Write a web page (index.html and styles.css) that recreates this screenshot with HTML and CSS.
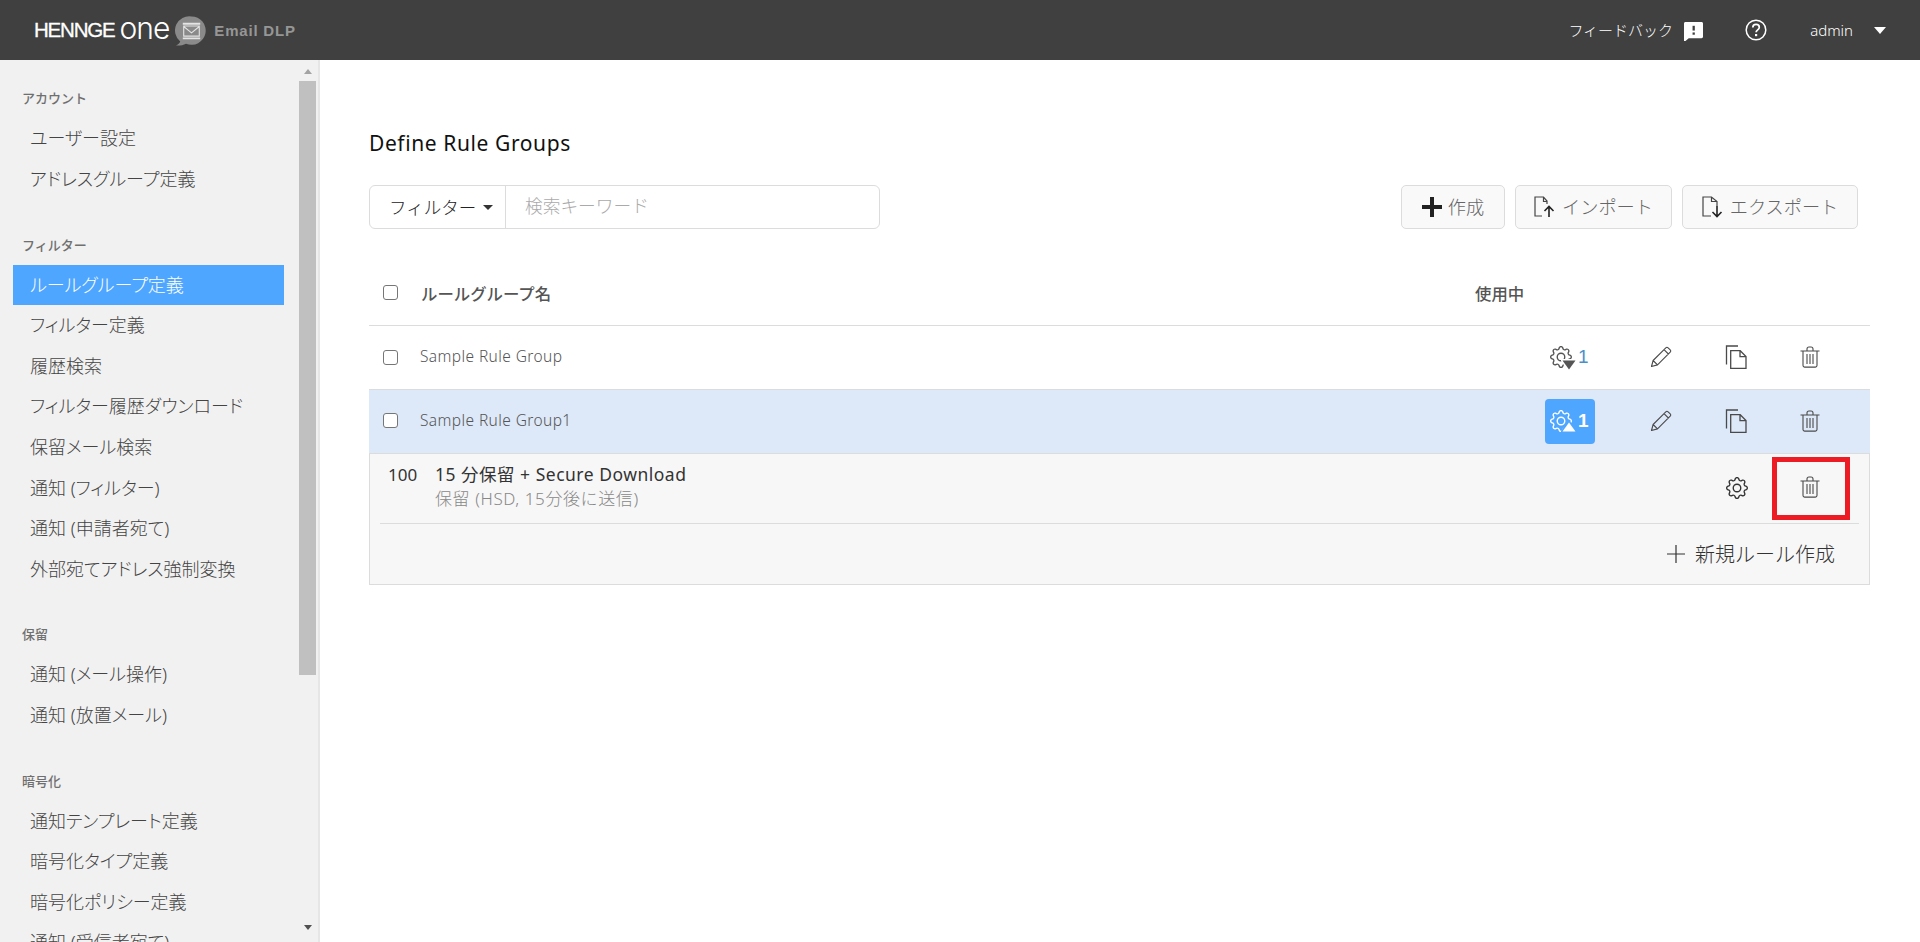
FILE: index.html
```html
<!DOCTYPE html>
<html lang="ja">
<head>
<meta charset="utf-8">
<title>Define Rule Groups</title>
<link rel="stylesheet" href="styles.css">
</head>
<body>
<svg class="defs" xmlns="http://www.w3.org/2000/svg">
  <symbol id="gear" viewBox="0 0 16 16">
    <path d="M8 4.754a3.246 3.246 0 1 0 0 6.492 3.246 3.246 0 0 0 0-6.492zM5.754 8a2.246 2.246 0 1 1 4.492 0 2.246 2.246 0 0 1-4.492 0z"/>
    <path d="M9.796 1.343c-.527-1.79-3.065-1.79-3.592 0l-.094.319a.873.873 0 0 1-1.255.52l-.292-.16c-1.64-.892-3.433.902-2.54 2.541l.159.292a.873.873 0 0 1-.52 1.255l-.319.094c-1.79.527-1.79 3.065 0 3.592l.319.094a.873.873 0 0 1 .52 1.255l-.16.292c-.892 1.64.901 3.434 2.541 2.54l.292-.159a.873.873 0 0 1 1.255.52l.094.319c.527 1.79 3.065 1.79 3.592 0l.094-.319a.873.873 0 0 1 1.255-.52l.292.16c1.64.893 3.434-.902 2.54-2.541l-.159-.292a.873.873 0 0 1 .52-1.255l.319-.094c1.79-.527 1.79-3.065 0-3.592l-.319-.094a.873.873 0 0 1-.52-1.255l.16-.292c.893-1.64-.902-3.433-2.541-2.54l-.292.159a.873.873 0 0 1-1.255-.52l-.094-.319zm-2.633.283c.246-.835 1.428-.835 1.674 0l.094.319a1.873 1.873 0 0 0 2.693 1.115l.291-.16c.764-.415 1.6.42 1.184 1.185l-.159.292a1.873 1.873 0 0 0 1.116 2.692l.318.094c.835.246.835 1.428 0 1.674l-.319.094a1.873 1.873 0 0 0-1.115 2.693l.16.291c.415.764-.42 1.6-1.185 1.184l-.291-.159a1.873 1.873 0 0 0-2.693 1.116l-.094.318c-.246.835-1.428.835-1.674 0l-.094-.319a1.873 1.873 0 0 0-2.692-1.115l-.292.16c-.764.415-1.6-.42-1.184-1.185l.159-.291A1.873 1.873 0 0 0 1.945 8.93l-.319-.094c-.835-.246-.835-1.428 0-1.674l.319-.094A1.873 1.873 0 0 0 3.06 4.377l-.16-.292c-.415-.764.42-1.6 1.185-1.184l.292.159a1.873 1.873 0 0 0 2.692-1.115l.094-.319z"/>
  </symbol>
  <symbol id="pencil" viewBox="0 0 22 22">
    <path d="M1.500 20.500l1.600-6L15.800 1.800c.7-.7 1.600-.7 2.300 0l2.100 2.100c.7.700.7 1.600 0 2.300L7.500 18.900z M3.100 14.500l4.400 4.400 M14 3.600l4.400 4.400" fill="none" stroke="currentColor" stroke-width="1.100" stroke-linejoin="round"/>
  </symbol>
  <symbol id="copy" viewBox="0 0 22 24">
    <path d="M13 1H1.500v18.500" fill="none" stroke="currentColor" stroke-width="1.300"/>
    <path d="M5.700 5.700h9.500l5.800 5.800v11.800H5.700z M15 5.700v6h6" fill="none" stroke="currentColor" stroke-width="1.300"/>
  </symbol>
  <symbol id="trash" viewBox="0 0 20 22">
    <path d="M.5 5h19 M7 5V3c0-1.300.8-2 2-2h2c1.200 0 2 .7 2 2v2 M3 5v14.500c0 1 .7 1.600 1.600 1.600h10.800c.9 0 1.600-.6 1.600-1.600V5 M7 8v10 M10 8v10 M13 8v10" fill="none" stroke="currentColor" stroke-width="1.100"/>
  </symbol>
</svg>

<header class="topbar">
  <div class="brand">
    <span class="logo-word">HENNGE</span><span class="logo-one">one</span>
    <svg class="logo-mark" viewBox="0 0 36 36" aria-hidden="true">
      <path d="M18 1.500a15.500 15.500 0 1 1-6 29.800C9 33 5 33.600 1 33.300c2.500-1 4-2.600 4.700-4.500A15.500 15.500 0 0 1 18 1.500z" fill="#8a8a8a"/>
      <path d="M8.500 9.500h19 M8.500 25.500h19" stroke="#e4e4e4" stroke-width="2"/>
      <path d="M9.500 12v11h17V12z M9.500 12.500l8.500 7 8.500-7" fill="none" stroke="#e4e4e4" stroke-width="1.200"/>
    </svg>
    <span class="product">Email DLP</span>
  </div>
  <div class="top-actions">
    <span class="feedback">フィードバック</span>
    <svg class="ico-feedback" viewBox="0 0 20 20" aria-hidden="true">
      <path d="M1.500 0h17c.8 0 1.500.7 1.500 1.500v14c0 .8-.7 1.500-1.500 1.500H5l-4 3.500c-.4.300-1 .1-1-.5V1.500C0 .7.700 0 1.500 0z" fill="#fff"/>
      <rect x="9" y="4" width="2.400" height="5" fill="#404040"/>
      <rect x="9" y="11" width="2.400" height="2.400" fill="#404040"/>
    </svg>
    <svg class="ico-help" viewBox="0 0 22 22" aria-hidden="true">
      <circle cx="11" cy="11" r="9.800" fill="none" stroke="#fff" stroke-width="1.500"/>
      <path d="M7.800 8.600c0-2 1.500-3.200 3.300-3.200s3.200 1.200 3.200 2.900c0 2.500-3.200 2.600-3.200 5" fill="none" stroke="#fff" stroke-width="1.700"/>
      <rect x="10" y="15" width="2.200" height="2.200" fill="#fff"/>
    </svg>
    <span class="user">admin</span>
    <span class="caret-user"></span>
  </div>
</header>

<div class="shell">
  <aside class="sidebar">
    <nav class="nav">
      <h3 class="nav-title">アカウント</h3>
      <a class="nav-item">ユーザー設定</a>
      <a class="nav-item">アドレスグループ定義</a>
      <h3 class="nav-title">フィルター</h3>
      <a class="nav-item active">ルールグループ定義</a>
      <a class="nav-item">フィルター定義</a>
      <a class="nav-item">履歴検索</a>
      <a class="nav-item">フィルター履歴ダウンロード</a>
      <a class="nav-item">保留メール検索</a>
      <a class="nav-item">通知 (フィルター)</a>
      <a class="nav-item">通知 (申請者宛て)</a>
      <a class="nav-item">外部宛てアドレス強制変換</a>
      <h3 class="nav-title">保留</h3>
      <a class="nav-item">通知 (メール操作)</a>
      <a class="nav-item">通知 (放置メール)</a>
      <h3 class="nav-title">暗号化</h3>
      <a class="nav-item">通知テンプレート定義</a>
      <a class="nav-item">暗号化タイプ定義</a>
      <a class="nav-item">暗号化ポリシー定義</a>
      <a class="nav-item">通知 (受信者宛て)</a>
    </nav>
    <div class="scrollbar">
      <span class="arrow-up"></span>
      <span class="thumb"></span>
      <span class="arrow-down"></span>
    </div>
  </aside>

  <main class="main">
    <h1 class="page-title">Define Rule Groups</h1>

    <div class="toolbar">
      <div class="search">
        <div class="search-filter">フィルター<span class="caret-small"></span></div>
        <div class="search-input">検索キーワード</div>
      </div>
      <div class="buttons">
        <button class="btn btn-create">
          <svg class="ico-plus" viewBox="0 0 20 20" aria-hidden="true"><path d="M8 0h4v8h8v4h-8v8H8v-8H0V8h8z" fill="#222"/></svg>作成
        </button>
        <button class="btn btn-import">
          <svg class="ico-file" viewBox="0 0 22 22" aria-hidden="true">
            <path d="M8 20H1V1h8.500L13 5v3 M9.500 1v4.500H13" fill="none" stroke="#444" stroke-width="1.200"/>
            <path d="M15 21V11 M10.500 15l4.500-4.500 4.500 4.500" fill="none" stroke="#222" stroke-width="1.600"/>
          </svg>インポート
        </button>
        <button class="btn btn-export">
          <svg class="ico-file" viewBox="0 0 22 22" aria-hidden="true">
            <path d="M9 20H1V1h8.500L15 5.500V10 M9.500 1v4.500H15" fill="none" stroke="#444" stroke-width="1.200"/>
            <path d="M15 10v10 M10.500 16l4.500 4.500 4.500-4.500" fill="none" stroke="#222" stroke-width="1.600"/>
          </svg>エクスポート
        </button>
      </div>
    </div>

    <div class="table">
      <div class="head-row">
        <span class="check"></span>
        <span class="head-name">ルールグループ名</span>
        <span class="head-use">使用中</span>
      </div>

      <div class="row">
        <span class="check"></span>
        <span class="row-name">Sample Rule Group</span>
        <span class="usage">
          <svg class="ico-gear"><use href="#gear"/></svg>
          <svg class="tri tri-closed" viewBox="0 0 16 12" aria-hidden="true"><polygon points="1.500,1.500 14.500,1.500 8,10.500"/></svg>
          <span class="usage-num">1</span>
        </span>
        <span class="cell-edit"><svg class="ico-pencil"><use href="#pencil"/></svg></span>
        <span class="cell-copy"><svg class="ico-copy"><use href="#copy"/></svg></span>
        <span class="cell-del"><svg class="ico-trash"><use href="#trash"/></svg></span>
      </div>

      <div class="row selected">
        <span class="check"></span>
        <span class="row-name">Sample Rule Group1</span>
        <span class="usage open">
          <svg class="ico-gear"><use href="#gear"/></svg>
          <svg class="tri tri-open" viewBox="0 0 16 12" aria-hidden="true"><polygon points="1.500,10.500 14.500,10.500 8,1.500"/></svg>
          <span class="usage-num">1</span>
        </span>
        <span class="cell-edit"><svg class="ico-pencil"><use href="#pencil"/></svg></span>
        <span class="cell-copy"><svg class="ico-copy"><use href="#copy"/></svg></span>
        <span class="cell-del"><svg class="ico-trash"><use href="#trash"/></svg></span>
      </div>

      <div class="detail">
        <div class="rule">
          <span class="rule-order">100</span>
          <div class="rule-text">
            <div class="rule-name">15 分保留 + Secure Download</div>
            <div class="rule-sub">保留 (HSD, 15分後に送信)</div>
          </div>
          <span class="rule-gear"><svg class="ico-gear-dark"><use href="#gear"/></svg></span>
          <span class="rule-del"><svg class="ico-trash"><use href="#trash"/></svg></span>
          <span class="highlight"></span>
        </div>
        <div class="new-rule">
          <svg class="ico-thin-plus" viewBox="0 0 18 18" aria-hidden="true"><path d="M0 9h18 M9 0v18" stroke="#333" stroke-width="1.200"/></svg>
          <span>新規ルール作成</span>
        </div>
      </div>
    </div>
  </main>
</div>
</body>
</html>
```

FILE: styles.css
```css
* { box-sizing: border-box; }

html, body {
  margin: 0;
  height: 942px;
  overflow: hidden;
}

body {
  font-family: "Noto Sans", "Noto Sans CJK JP", sans-serif;
  font-weight: 300;
  color: #333;
  background: #fff;
  font-size: 16px;
}

.defs { display: none; }

/* Top bar */
.topbar {
  height: 60px;
  background: #404040;
  color: #fff;
  display: flex;
  align-items: center;
  justify-content: space-between;
}

.brand {
  display: flex;
  align-items: center;
  padding-left: 34px;
}

.logo-word {
  font-family: "Liberation Sans", sans-serif;
  font-size: 20.500px;
  font-weight: 400;
  letter-spacing: -1.200px;
  color: #fff;
  -webkit-text-stroke: 0.3px #fff;
}

.logo-one {
  font-family: "Inter", sans-serif;
  font-size: 30px;
  line-height: 30px;
  font-weight: 300;
  letter-spacing: -1px;
  margin: -5px 0 0 5px;
  color: #fff;
}

.logo-mark {
  width: 33px;
  height: 33px;
  margin: 2px 0 0 6px;
}

.product {
  font-family: "Liberation Sans", sans-serif;
  font-weight: 700;
  font-size: 15px;
  letter-spacing: 0.8px;
  color: #969696;
  margin-left: 6px;
}

.top-actions {
  display: flex;
  align-items: center;
  padding-right: 34px;
}

.feedback { font-size: 15px; padding-bottom: 2px; }

.ico-feedback { width: 19px; height: 19px; margin: 2px 0 0 11px; }

.ico-help { width: 22px; height: 22px; margin-left: 42px; }

.user { font-size: 15px; margin-left: 43px; }

.caret-user {
  width: 0;
  height: 0;
  border-left: 6.500px solid transparent;
  border-right: 6.500px solid transparent;
  border-top: 7px solid #fff;
  margin-left: 21px;
}

/* Layout */
.shell {
  display: flex;
  height: 882px;
}

/* Sidebar */
.sidebar {
  width: 320px;
  flex: none;
  display: flex;
  background: #f1f1f1;
  border-right: 2px solid #e6e6e6;
  overflow: hidden;
}

.nav {
  width: 299px;
  flex: none;
  padding: 18.400px 15px 0 13px;
  overflow: hidden;
}

.nav-title {
  margin: 25px 0 0 9px;
  height: 40px;
  line-height: 40px;
  font-size: 13px;
  font-weight: 500;
  color: #6f6f6f;
}

.nav-title:first-child { margin-top: 0; }

.nav-item {
  display: block;
  height: 40.600px;
  line-height: 40.600px;
  padding: 0 0 0 17px;
  font-size: 18px;
  font-feature-settings: "palt";
  color: #444;
  white-space: nowrap;
}

.nav-item.active {
  background: #4fa6ff;
  color: #fff;
}

.scrollbar {
  width: 17px;
  flex: none;
  display: flex;
  flex-direction: column;
  align-items: center;
}

.arrow-up, .arrow-down {
  width: 0;
  height: 0;
  border-left: 4.500px solid transparent;
  border-right: 4.500px solid transparent;
  flex: none;
}

.arrow-up {
  border-bottom: 5px solid #a3a3a3;
  margin: 9px 0 7px;
}

.thumb {
  width: 17px;
  height: 594px;
  background: #c0c0c0;
  flex: none;
}

.arrow-down {
  border-top: 5px solid #505050;
  margin-top: 250px;
}

/* Main */
.main {
  flex: 1;
  min-width: 0;
  padding: 68px 50px 0 49px;
}

.page-title {
  margin: 0;
  height: 30px;
  line-height: 30px;
  font-size: 21px;
  font-weight: 400;
  letter-spacing: 0.6px;
  color: #111;
}

.toolbar {
  display: flex;
  justify-content: space-between;
  margin-top: 27px;
  height: 44px;
  padding-right: 12px;
}

.search {
  width: 511px;
  display: flex;
  border: 1px solid #dcdcdc;
  border-radius: 6px;
}

.search-filter {
  width: 136px;
  border-right: 1px solid #dcdcdc;
  padding-left: 19px;
  font-size: 17.500px;
  line-height: 40px;
  color: #222;
  display: flex;
  align-items: center;
}

.caret-small {
  width: 0;
  height: 0;
  border-left: 5px solid transparent;
  border-right: 5px solid transparent;
  border-top: 5px solid #333;
  margin-left: 7px;
}

.search-input {
  padding-left: 19px;
  font-size: 17.700px;
  line-height: 40px;
  color: #aaa;
}

.buttons {
  display: flex;
  gap: 10px;
}

.btn {
  height: 44px;
  padding: 0 0 3px;
  display: flex;
  align-items: center;
  justify-content: center;
  background: #f9f9f9;
  border: 1px solid #dcdcdc;
  border-radius: 5px;
  font: inherit;
  font-size: 18.200px;
  color: #666;
}

.btn-create { width: 104px; }
.btn-import { width: 157px; }
.btn-export { width: 176px; }

.ico-plus { width: 20px; height: 20px; margin: 3px 6px 0 0; }
.ico-file { width: 22px; height: 22px; margin: 3px 6px 0 0; }

/* Table */
.table { margin-top: 0; }

.head-row {
  height: 97px;
  display: flex;
  align-items: center;
  padding: 31px 0 0 14px;
  border-bottom: 1px solid #dcdcdc;
}

.check {
  width: 15px;
  height: 15px;
  flex: none;
  background: #fff;
  border: 1px solid #767676;
  border-radius: 3px;
}

.head-name {
  margin-left: 23px;
  font-size: 16.400px;
  font-weight: 500;
  color: #555;
  width: 1054px;
  flex: none;
}

.head-use {
  font-size: 16.400px;
  font-weight: 500;
  color: #555;
}

.row {
  height: 64px;
  display: flex;
  align-items: center;
  padding-left: 14px;
  border-bottom: 1px solid #dcdcdc;
}

.row.selected {
  background: #dde8f8;
}

.row.selected .check { margin-bottom: 2px; }

.row-name {
  margin: 0 0 3px 22px;
  width: 1125px;
  flex: none;
  font-size: 15.500px;
  letter-spacing: 0.4px;
  color: #555;
}

.usage {
  position: relative;
  width: 50px;
  height: 45px;
  flex: none;
  display: flex;
  align-items: center;
  padding-left: 5px;
  color: #555;
  border-radius: 4px;
}

.usage.open {
  background: #4fa6ff;
  color: #fff;
}

.ico-gear {
  width: 22px;
  height: 22px;
  margin-bottom: 2px;
  fill: currentColor;
}

.tri {
  position: absolute;
  left: 16px;
  width: 16px;
  height: 12px;
  stroke-width: 3px;
  paint-order: stroke;
  stroke-linejoin: round;
}

.tri-closed {
  top: 24px;
  fill: #555;
  stroke: #fff;
}

.tri-open {
  top: 22px;
  fill: #fff;
  stroke: #4fa6ff;
}

.usage-num {
  margin: 0 0 2px 6px;
  font-family: "Liberation Sans", sans-serif;
  font-size: 19px;
  font-weight: 400;
  color: #4a90c8;
}

.usage.open .usage-num {
  color: #fff;
  font-weight: 700;
}

.cell-edit, .cell-copy, .cell-del, .rule-gear, .rule-del {
  display: flex;
  align-items: center;
  justify-content: center;
  flex: none;
  color: #4a4a4a;
  margin-bottom: 2px;
}

.cell-edit { width: 24px; margin-left: 54px; }
.cell-copy { width: 24px; margin-left: 51px; }
.cell-del { width: 22px; margin-left: 51px; }

.ico-pencil { width: 22px; height: 22px; }
.ico-copy { width: 22px; height: 24px; }
.ico-trash { width: 20px; height: 22px; }

/* Expanded rule */
.detail {
  height: 131px;
  background: #f7f7f7;
  border: 1px solid #dcdcdc;
  border-top: 0;
  padding: 0 10px;
}

.rule {
  position: relative;
  height: 70px;
  display: flex;
  align-items: center;
  border-bottom: 1px solid #dcdcdc;
}

.rule-order {
  width: 55px;
  flex: none;
  padding: 0 0 28px 8px;
  font-size: 17px;
  font-weight: 400;
  color: #333;
}

.rule-text {
  flex: 1;
  min-width: 0;
  padding-bottom: 3px;
}

.rule-name {
  font-size: 17.500px;
  line-height: 23px;
  letter-spacing: 0.5px;
  font-weight: 400;
  color: #333;
}

.rule-sub {
  font-size: 17px;
  line-height: 25px;
  letter-spacing: 0.6px;
  color: #888;
}

.rule-gear { width: 22px; margin-right: 52px; }

.ico-gear-dark {
  width: 22px;
  height: 22px;
  fill: #333;
}

.rule-del { width: 20px; margin: 0 39px 3px 0; }

.highlight {
  position: absolute;
  right: 9px;
  top: 3px;
  width: 78px;
  height: 63px;
  border: 5px solid #ed1c24;
}

.new-rule {
  height: 59px;
  display: flex;
  align-items: center;
  justify-content: flex-end;
  padding-right: 24px;
  font-size: 20px;
  color: #333;
}

.ico-thin-plus {
  width: 18px;
  height: 18px;
  margin-right: 10px;
}
```
